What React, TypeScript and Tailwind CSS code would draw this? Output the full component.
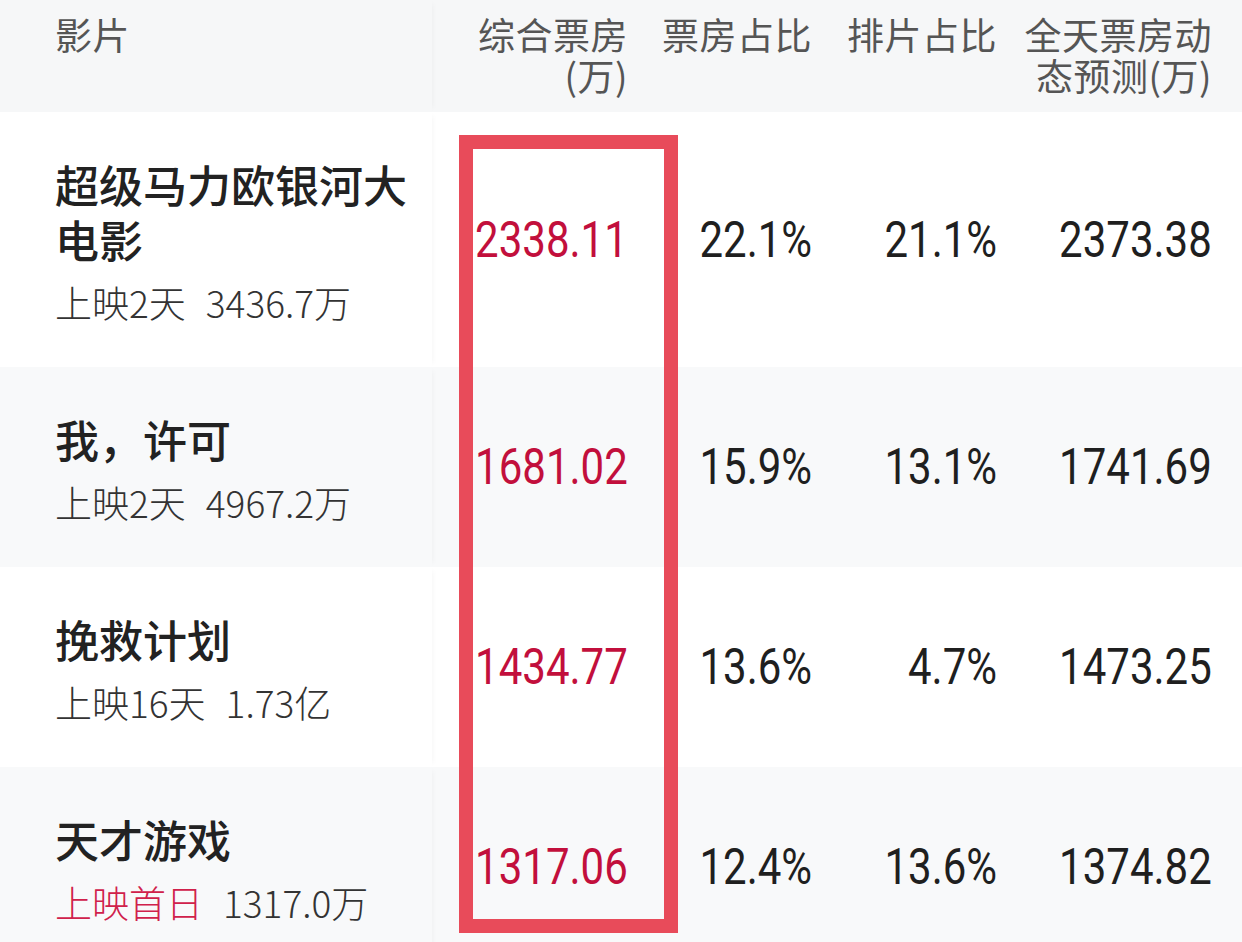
import { Fragment } from 'react'

type Film = {
  name: string[]
  tag: string
  tagRed?: boolean
  total: string
  box: string
  share: string
  schedule: string
  forecast: string
}

const films: Film[] = [
  { name: ['超级马力欧银河大', '电影'], tag: '上映2天', total: '3436.7万', box: '2338.11', share: '22.1%', schedule: '21.1%', forecast: '2373.38' },
  { name: ['我，许可'], tag: '上映2天', total: '4967.2万', box: '1681.02', share: '15.9%', schedule: '13.1%', forecast: '1741.69' },
  { name: ['挽救计划'], tag: '上映16天', total: '1.73亿', box: '1434.77', share: '13.6%', schedule: '4.7%', forecast: '1473.25' },
  { name: ['天才游戏'], tag: '上映首日', tagRed: true, total: '1317.0万', box: '1317.06', share: '12.4%', schedule: '13.6%', forecast: '1374.82' },
]

const cjk = "font-['Noto_Sans_CJK_SC','Noto_Sans',sans-serif]"

function Num({ value, red }: { value: string; red?: boolean }) {
  return (
    <span
      className={`inline-block origin-right scale-x-[0.84] font-['Roboto','Liberation_Sans',sans-serif] text-[50px] leading-none ${red ? 'text-[#c20f3c]' : 'text-[#1f1f1f]'}`}
    >
      {value}
    </span>
  )
}

export default function App() {
  const cols = 'grid grid-cols-[432px_196px_184px_185px_1fr] pr-[30px]'

  return (
    <div className={`relative w-[1242px] h-[942px] overflow-hidden bg-white ${cjk}`}>
      {/* header */}
      <div className={`${cols} h-[112px] bg-[#f6f7f8] text-[37px] leading-[41px] tracking-[0.5px] text-[#555]`}>
        <div className="pl-[55px] pt-[14px] shadow-[4px_0_6px_-4px_rgba(0,0,0,0.05)]">影片</div>
        <div className="pt-[14px] text-right">综合票房<br />(万)</div>
        <div className="pt-[14px] text-right">票房占比</div>
        <div className="pt-[14px] text-right">排片占比</div>
        <div className="pt-[14px] text-right">全天票房动<br />态预测(万)</div>
      </div>

      {films.map((f, i) => (
        <div key={f.box} className={`${cols} ${i % 2 === 1 ? 'bg-[#f8f9fa]' : 'bg-white'}`}>
          <div className="flex flex-col justify-center py-[45px] pl-[55px] shadow-[4px_0_6px_-4px_rgba(0,0,0,0.05)]">
            <div className="text-[44px] leading-[55px] font-medium text-[#222]">
              {f.name.map((line, j) => (
                <Fragment key={j}>
                  {j > 0 && <br />}
                  {line}
                </Fragment>
              ))}
            </div>
            <div className="mt-[15px] text-[37px] leading-[40px] font-light text-[#333]">
              <span className={f.tagRed ? 'text-[#d0214b]' : ''}>{f.tag}</span>
              <span className="ml-[20px]">{f.total}</span>
            </div>
          </div>
          <div className="flex items-center justify-end">
            <Num value={f.box} red />
          </div>
          <div className="flex items-center justify-end">
            <Num value={f.share} />
          </div>
          <div className="flex items-center justify-end">
            <Num value={f.schedule} />
          </div>
          <div className="flex items-center justify-end">
            <Num value={f.forecast} />
          </div>
        </div>
      ))}

      {/* red highlight annotation */}
      <div className="absolute left-[459px] top-[135px] h-[798px] w-[219px] border-[14px] border-[#e84b5a]" />
    </div>
  )
}
